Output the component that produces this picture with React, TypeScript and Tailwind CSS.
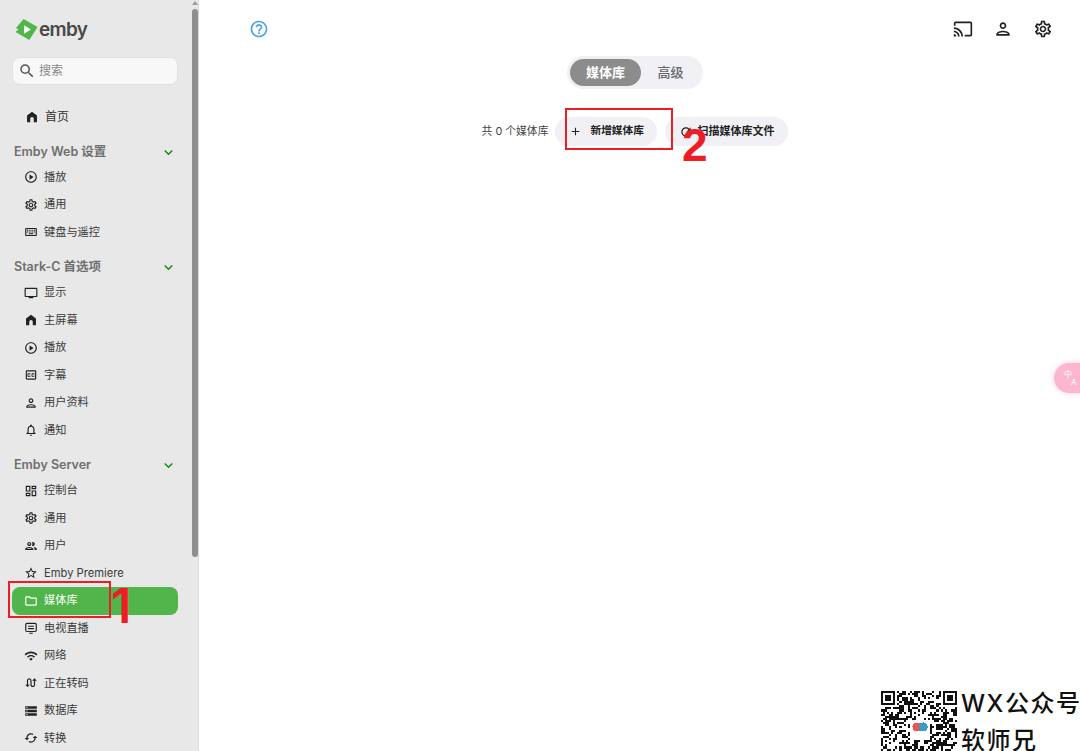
import type { IconType } from "react-icons";
import {
  MdAdd,
  MdCached,
  MdExpandMore,
  MdHelpOutline,
  MdOutlineCast,
  MdOutlineClosedCaption,
  MdOutlineDashboard,
  MdOutlineFolder,
  MdOutlineKeyboard,
  MdOutlineNotifications,
  MdOutlinePeople,
  MdOutlinePerson,
  MdOutlinePlayCircle,
  MdOutlineRefresh,
  MdOutlineSearch,
  MdOutlineSettings,
  MdOutlineStarBorder,
  MdOutlineStorage,
  MdOutlineTv,
  MdOutlineWifi,
  MdSwapCalls,
} from "react-icons/md";

const fontStack = "font-['Inter','Noto_Sans_CJK_SC',sans-serif]";

function HomeIcon({ className }: { className?: string }) {
  return (
    <svg viewBox="0 0 24 24" fill="currentColor" className={className}>
      <path d="M12 3 3.5 9.5V21H9v-6a3 3 0 0 1 6 0v6h5.5V9.5Z" />
    </svg>
  );
}

function LiveTvIcon({ className }: { className?: string }) {
  return (
    <svg viewBox="0 0 24 24" fill="none" stroke="currentColor" strokeWidth="2" className={className}>
      <rect x="3" y="4" width="18" height="14" rx="2" />
      <path d="M7 9h10M7 13h10M9 21h6" />
    </svg>
  );
}

interface NavEntry {
  icon: IconType | typeof HomeIcon;
  label: string;
  active?: boolean;
}

interface NavSection {
  title: string;
  items: NavEntry[];
}

const sections: NavSection[] = [
  {
    title: "Emby Web 设置",
    items: [
      { icon: MdOutlinePlayCircle, label: "播放" },
      { icon: MdOutlineSettings, label: "通用" },
      { icon: MdOutlineKeyboard, label: "键盘与遥控" },
    ],
  },
  {
    title: "Stark-C 首选项",
    items: [
      { icon: MdOutlineTv, label: "显示" },
      { icon: HomeIcon, label: "主屏幕" },
      { icon: MdOutlinePlayCircle, label: "播放" },
      { icon: MdOutlineClosedCaption, label: "字幕" },
      { icon: MdOutlinePerson, label: "用户资料" },
      { icon: MdOutlineNotifications, label: "通知" },
    ],
  },
  {
    title: "Emby Server",
    items: [
      { icon: MdOutlineDashboard, label: "控制台" },
      { icon: MdOutlineSettings, label: "通用" },
      { icon: MdOutlinePeople, label: "用户" },
      { icon: MdOutlineStarBorder, label: "Emby Premiere" },
      { icon: MdOutlineFolder, label: "媒体库", active: true },
      { icon: LiveTvIcon, label: "电视直播" },
      { icon: MdOutlineWifi, label: "网络" },
      { icon: MdSwapCalls, label: "正在转码" },
      { icon: MdOutlineStorage, label: "数据库" },
      { icon: MdCached, label: "转换" },
    ],
  },
];

function NavRow({ icon: Icon, label, active }: NavEntry) {
  return (
    <div
      className={`flex h-[27.5px] shrink-0 items-center gap-[6px] rounded-lg pl-[12px] text-[11.2px] ${
        active ? "bg-[#52b54b] text-white" : "text-[#3a3a3a]"
      }`}
    >
      <Icon className={`h-[14px] w-[14px] ${active ? "text-white" : "text-[#222]"}`} />
      <span>{label}</span>
    </div>
  );
}

function EmbyLogo() {
  return (
    <svg viewBox="0 0 24 24" className="h-[23px] w-[23px] shrink-0">
      <path d="M9 1 23.5 9.5 15 23 .5 14.5 3.5 12 1 10.5Z" fill="#52b54b" />
      <path d="M9.5 7.5 16.5 12 9.5 16.5Z" fill="#fff" />
    </svg>
  );
}

// not a real code, only the look of one
function QrCode() {
  const size = 37;
  const cells: { x: number; y: number }[] = [];
  let seed = 17;
  const inFinder = (x: number, y: number) =>
    (x < 8 && y < 8) || (x >= size - 8 && y < 8) || (x < 8 && y >= size - 8);
  for (let y = 0; y < size; y++) {
    for (let x = 0; x < size; x++) {
      seed = (seed * 137 + 59) % 1009;
      const inLogo = x > 13 && x < 24 && y > 13 && y < 24;
      if (!inFinder(x, y) && !inLogo && seed % 2 === 0) cells.push({ x, y });
    }
  }
  const corners = [
    [0, 0],
    [size - 7, 0],
    [0, size - 7],
  ];
  return (
    <svg viewBox={`0 0 ${size} ${size}`} className="h-[76px] w-[76px] shrink-0 blur-[0.4px]" shapeRendering="crispEdges">
      <rect width={size} height={size} fill="#fff" />
      {cells.map((c) => (
        <rect key={`${c.x}-${c.y}`} x={c.x} y={c.y} width="1" height="1" fill="#111" />
      ))}
      {corners.map(([x, y]) => (
        <g key={`${x}-${y}`}>
          <rect x={x} y={y} width="7" height="7" fill="#111" />
          <rect x={x + 1} y={y + 1} width="5" height="5" fill="#fff" />
          <rect x={x + 2} y={y + 2} width="3" height="3" fill="#111" />
        </g>
      ))}
      <circle cx="17.5" cy="17.5" r="2.2" fill="#e8584f" />
      <circle cx="20.5" cy="17.5" r="2.2" fill="#3a9bc4" />
    </svg>
  );
}

export default function App() {
  return (
    <div className={`relative flex h-[751px] w-[1080px] overflow-hidden bg-white ${fontStack}`}>
      <aside className="flex h-full w-[199px] shrink-0 border-r border-[#dcdcdc] bg-[#e8e8e8]">
        <div className="flex min-w-0 flex-1 flex-col overflow-hidden pl-[12px] pr-[13px]">
          <div className="mt-[19px] flex h-[21px] shrink-0 items-center gap-[1px] pl-[3px]">
            <EmbyLogo />
            <span className="text-[19px] font-semibold leading-none tracking-[-0.7px] text-[#484848]">emby</span>
          </div>
          <div className="mt-[17px] flex h-[28px] shrink-0 items-center gap-[3px] rounded-lg border border-[#e2e2e2] bg-[#f8f8f8] pl-[5px] text-[12px] text-[#8a8a8a]">
            <MdOutlineSearch className="h-[18px] w-[18px] text-[#555]" />
            <span>搜索</span>
          </div>
          <div className="mt-[18.5px] flex h-[27px] shrink-0 items-center gap-[6px] pl-[13px] text-[12px] text-[#333]">
            <HomeIcon className="h-[14px] w-[14px] text-[#222]" />
            <span>首页</span>
          </div>
          {sections.map((section) => (
            <section key={section.title} className="flex shrink-0 flex-col">
              <div className="mt-[8px] flex h-[25px] shrink-0 items-center justify-between pl-[2px] pr-[1px] pt-[2.5px] text-[12.5px] font-semibold text-[#6f6f6f]">
                <span>{section.title}</span>
                <MdExpandMore className="h-[17px] w-[17px] text-[#0f8a0f]" />
              </div>
              {section.items.map((item) => (
                <NavRow key={item.label} {...item} />
              ))}
            </section>
          ))}
        </div>
        <div className="flex w-[7px] shrink-0 flex-col items-center">
          <div className="mt-[1px] h-0 w-0 border-x-[3px] border-b-[4px] border-x-transparent border-b-[#9a9a9a]" />
          <div className="mt-[4px] h-[548px] w-[6px] rounded-full bg-[#8f8f8f]" />
        </div>
      </aside>

      <main className="flex min-w-0 flex-1 flex-col pr-[9px]">
        <header className="flex h-[56px] shrink-0 items-start pl-[50px]">
          <MdHelpOutline className="mt-[19px] h-[20px] w-[20px] text-[#4aa3e8]" />
        </header>
        <div className="flex justify-center">
          <div className="flex h-[33px] items-center rounded-full bg-[#f0f0f5] px-[3px] text-[13px] font-medium">
            <span className="flex h-[27px] w-[71px] items-center justify-center rounded-full bg-[#8c8c8c] font-bold text-white">
              媒体库
            </span>
            <span className="flex h-[27px] w-[59px] items-center justify-center text-[#666]">高级</span>
          </div>
        </div>
        <div className="mt-[28px] flex items-center justify-center">
          <span className="mr-[7px] pt-[1px] text-[10.8px] text-[#444]">共 0 个媒体库</span>
          <div className="flex h-[29px] w-[102px] items-center rounded-full bg-[#f0f0f5] pl-[14px] text-[10.7px] font-bold text-[#222]">
            <MdAdd className="mr-[8px] h-[13px] w-[13px]" />
            新增媒体库
          </div>
          <div className="ml-[8px] flex h-[29px] w-[123px] items-center rounded-full bg-[#f0f0f5] pl-[14px] text-[11px] font-bold text-[#222]">
            <MdOutlineRefresh className="mr-[4px] h-[14px] w-[14px]" />
            扫描媒体库文件
          </div>
        </div>
      </main>

      {/* top right actions */}
      <div className="absolute right-[27px] top-[19px] flex items-center gap-[20px] text-[#222]">
        <MdOutlineCast className="h-[20px] w-[20px]" />
        <MdOutlinePerson className="h-[20px] w-[20px]" />
        <MdOutlineSettings className="h-[20px] w-[20px]" />
      </div>

      {/* translate widget stuck on the page edge */}
      <div className="absolute left-[1054px] top-[363px] flex h-[30px] w-[40px] flex-col justify-center rounded-l-full bg-[#fdb6d0] pl-[10px] text-white shadow-[0_0_6px_rgba(253,182,208,0.6)]">
        <span className="text-[8px] leading-[8px]">中</span>
        <span className="ml-[7px] text-[8px] leading-[8px]">A</span>
      </div>

      {/* screenshot annotations */}
      <div className="absolute left-[8px] top-[581px] h-[37px] w-[103px] border-2 border-[#ee1c25]" />
      <div className="absolute left-[565px] top-[108px] h-[42px] w-[108px] border-2 border-[#ee1c25]" />
      <span className="absolute left-[111px] top-[577px] text-[48px] font-semibold leading-[58px] text-[#ee1c25]">
        1
      </span>
      <span className="absolute left-[682px] top-[118px] text-[46px] font-bold leading-[54px] text-[#ee1c25] font-['Liberation_Sans',sans-serif]">
        2
      </span>

      {/* watermark */}
      <div className="absolute left-[881px] top-[691px] flex">
        <QrCode />
        <div className="ml-[4px] flex flex-col text-[24px] font-medium leading-[26px] tracking-[1.5px] text-[#111]">
          <span className="whitespace-nowrap">WX公众号</span>
          <span className="mt-[11px] whitespace-nowrap">软师兄</span>
        </div>
      </div>
    </div>
  );
}
